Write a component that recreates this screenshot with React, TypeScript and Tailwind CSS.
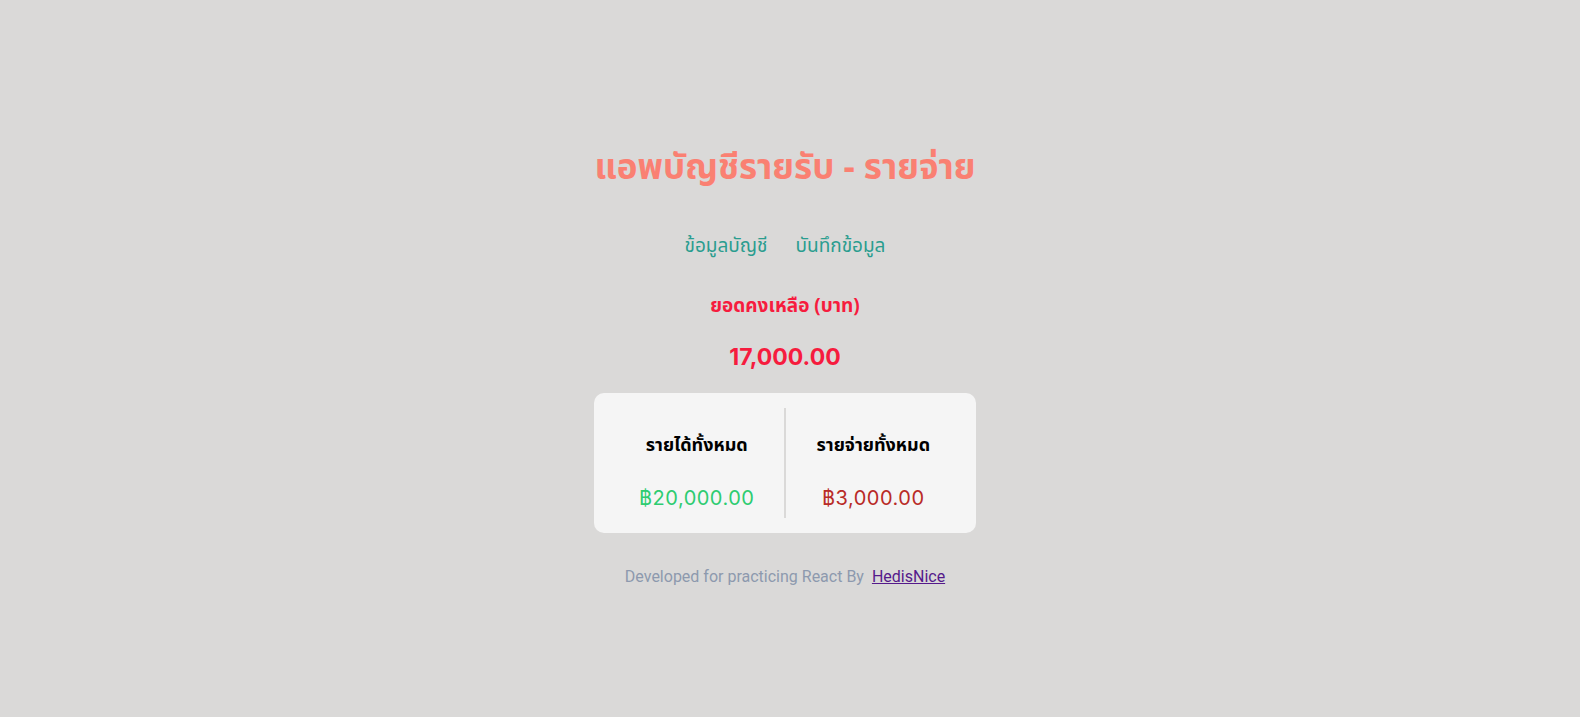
import React from "react";

function Nav() {
  return (
    <nav className="mt-10 flex justify-center gap-7 text-[19px] leading-7 text-[#2a9d8f]">
      <a href="#report">ข้อมูลบัญชี</a>
      <a href="#insert">บันทึกข้อมูล</a>
    </nav>
  );
}

function Total({ label, amount, tone }: { label: string; amount: string; tone: string }) {
  return (
    <div className="flex-1 pt-6 pb-1.5 text-center">
      <h4 className="text-lg leading-7 font-bold text-black">{label}</h4>
      <p className={`mt-6 font-['Inter','Noto_Sans_Thai',sans-serif] text-xl leading-7 tracking-wide ${tone}`}>{amount}</p>
    </div>
  );
}

export default function App() {
  return (
    <div className="flex min-h-screen flex-col items-center justify-center bg-[#dad9d8] pt-4 pr-2.5 font-['Noto_Sans_Thai','Noto_Sans',sans-serif]">
      <main className="flex flex-col text-center">
        <h1 className="text-[35px] leading-12 font-bold text-[#fa8072]">แอพบัญชีรายรับ - รายจ่าย</h1>
        <Nav />
        <h4 className="mt-8 text-[19px] leading-7 font-bold text-[#f61c3e]">ยอดคงเหลือ (บาท)</h4>
        <p className="mt-5 font-['Inter',sans-serif] text-[23px] leading-8 font-bold text-[#f61c3e]">17,000.00</p>
        <section className="mt-5 flex rounded-[10px] bg-[#f5f5f5] p-[15px] divide-x-2 divide-[#dad9d8]">
          <Total label="รายได้ทั้งหมด" amount="฿20,000.00" tone="text-[#2ecc71]" />
          <Total label="รายจ่ายทั้งหมด" amount="฿3,000.00" tone="text-[#b92b27]" />
        </section>
      </main>
      <footer className="mt-8 font-['Roboto',sans-serif] text-base text-[#8d99ae]">
        Developed for practicing React By <a className="ml-1 text-[#551a8b] underline" href="#author">HedisNice</a>
      </footer>
    </div>
  );
}
